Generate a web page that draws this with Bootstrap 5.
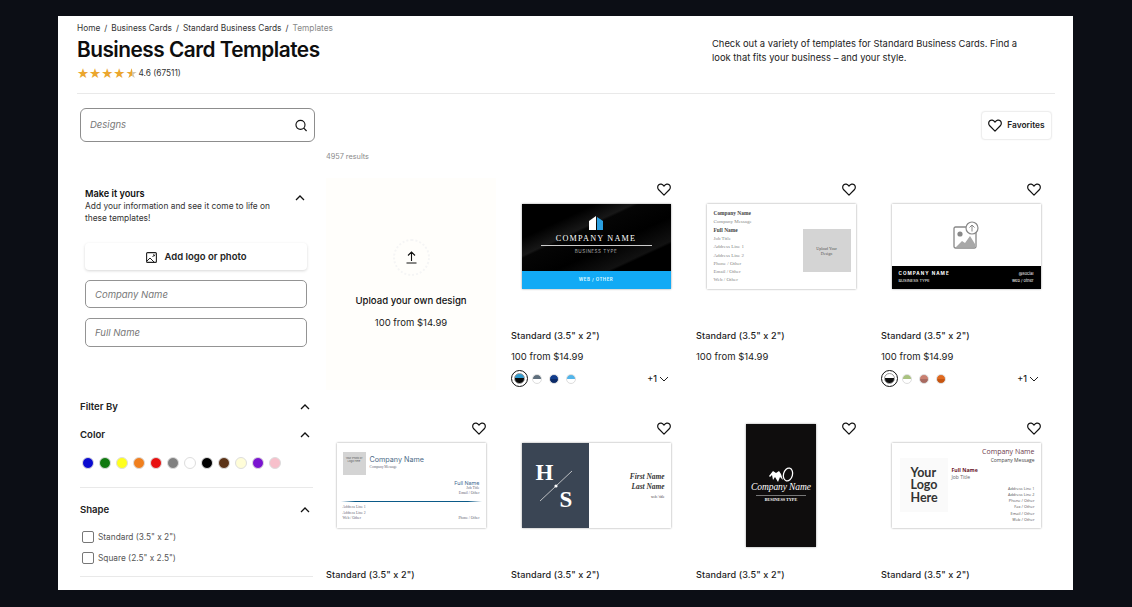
<!doctype html>
<html lang="en"><head><meta charset="utf-8"><title>Business Card Templates</title>
<link href="https://cdn.jsdelivr.net/npm/bootstrap@5.3.0/dist/css/bootstrap.min.css" rel="stylesheet">
<style>
html,body{height:607px;overflow:hidden}
body{background:#0c0e15;font-family:Inter,"Liberation Sans",sans-serif;color:#161616}
.sheet{background:#fff;width:1015px;height:574px;margin:16px 0 0 58px;padding:7px 18px 0 19px;overflow:hidden}
.head-row{height:71px;border-bottom:1px solid #e9e9e9}
.crumbs{font-size:8.3px;line-height:11px;margin:0;--bs-breadcrumb-divider-color:#333;--bs-breadcrumb-item-padding-x:4px;--bs-breadcrumb-margin-bottom:0}
.crumbs a{color:#333;text-decoration:none}
.crumbs .active{color:#888}
.page-title{font-size:20.8px;font-weight:600;letter-spacing:-.5px;line-height:28px;margin:2px 0 2px;color:#0e0e0e}
.rate{font-size:8.3px;line-height:14px;color:#333;gap:1px}
.stars{color:#eba62e;font-size:13.5px;line-height:14px;font-family:"DejaVu Sans",sans-serif}
.half{background:linear-gradient(90deg,#eba62e 55%,#cfc6b2 55%);-webkit-background-clip:text;background-clip:text;color:transparent}
.intro{width:315px;margin:14px 0 0 0;font-size:9.4px;line-height:14px;color:#222}
.side{width:249px;padding:14px 0 0 3px;flex:none}
.search-box{width:235px;height:34px;border:1px solid #8d8d8d;border-radius:6px;padding:0 7px 0 9px}
.search-box input,.ph-input{font-size:9.5px;font-style:italic;border:0;padding:0;box-shadow:none;background:transparent;color:#333}
.search-box input{padding-top:1px}
.search-box input::placeholder,.ph-input::placeholder{color:#777;opacity:1}
.make{padding:45px 8px 0 5px;height:258px}
.make-t{font-size:9.2px;font-weight:600;line-height:13px;color:#111}
.make-d{font-size:8.4px;line-height:12px;color:#333;width:200px}
.make-top{width:222px}
.make-top svg{margin-right:2px}
.logo-btn{margin-top:19px;height:27px;width:222px;font-size:9.5px;font-weight:600;background:#fff;border:0;border-radius:4px;box-shadow:0 1px 3px rgba(0,0,0,.16);color:#222;padding:1px 0 0}
.ph-input{display:block;width:222px;height:28px;border:1px solid #949494;border-radius:5px;padding:0 9px;margin-top:10px}
.ph-input+.ph-input{margin-top:10px;height:29px}
.flt{width:233px}
.flt-h{font-size:9.6px;font-weight:600;line-height:14px;height:14px;color:#222;padding-right:3px}
.color-h{margin-top:14px}
.dots{margin:15px 0 0 2px;gap:5px;height:12px;padding:0}
.dot{width:12px;height:12px;border-radius:50%;border:1px solid #ddd;flex:none}
.sep{border-top:1px solid #e9e9e9;height:0;margin:18px 0 15px}
.sep-end{margin-top:12px}
.shape-h{margin-bottom:14px}
.chk{font-size:8.3px;color:#555;gap:4px;height:12px;min-height:0;margin:0 0 9px 2px;padding:0}
.chk .form-check-input{width:12px;height:12px;margin:0;border:1px solid #777;border-radius:2px;float:none;flex:none}
.chk .form-check-label{line-height:12px}
.main-col{width:730px;padding-left:0}
.fav-row{padding:17px 3px 0 0;height:46px}
.fav-btn{width:71px;height:29px;font-size:8.4px;font-weight:600;border:1px solid #eee;border-radius:4px;background:#fff;color:#222;padding:0;gap:5px;box-shadow:0 0 2px rgba(0,0,0,.05)}
.results{font-size:7.3px;line-height:10px;color:#8a8a8a;margin:12px 0 0 0}
.tile-grid{display:grid;grid-template-columns:repeat(4,170px);column-gap:15px;grid-auto-rows:239px;margin-top:14px}
.tile{position:relative;font-size:10px}
.art{height:140px;display:flex;align-items:center;justify-content:center}
.like{position:absolute;top:7px;right:10px;width:14px;height:13px}
.name{font-size:9.1px;font-weight:500;line-height:14px;margin-top:13px;color:#1a1a1a;letter-spacing:.1px}
.price{font-size:9.5px;line-height:14px;margin-top:7px;color:#222}
.opts{margin-top:6px;height:17px;padding-right:12px}
.opts .ring{width:17px;height:17px;border:1.5px solid #111;border-radius:50%;margin-right:4px}
.sw{width:10px;height:10px;border-radius:50%;display:block;margin-right:7px;border:1px solid #ddd}
.ring .sw{margin:0;width:11px;height:11px;border:1px solid #999}
.more{font-size:9px;font-weight:500;color:#222;gap:2px}
.upload{background:#fffefb;height:212px;margin-top:2px;text-align:center}
.up-c{width:37px;height:37px;border-radius:50%;border:2px dotted #f5f5f5;margin:61px auto 18px}
.up-t{font-size:9.6px;font-weight:500;line-height:14px;color:#111}
.up-p{font-size:9.5px;line-height:14px;margin-top:8px;color:#222}
.mock{width:149px;height:85px;background:#fff;box-shadow:0 0 2px rgba(0,0,0,.4);overflow:hidden;display:flex;flex-direction:column}
.m-a{background:#000}
.m-a .top{height:67px;background:linear-gradient(155deg,#000 25%,#171717 38%,#050505 40%,#000 60%,#111 78%,#000 80%);color:#fff;text-align:center;padding-top:12px}
.m-a .cn{font-family:"Liberation Serif",serif;font-size:8.2px;letter-spacing:1.2px;line-height:10px;margin-top:4px;border-bottom:1px solid #ccc;margin-left:19px;margin-right:19px;padding-bottom:1px}
.m-a .bt{font-size:4.6px;letter-spacing:.5px;color:#aaa;line-height:8px;margin-top:2px}
.m-a .bot{height:18px;background:#12aaf5;color:#d8f6ff;font-size:4.4px;font-weight:700;letter-spacing:.5px;text-align:center;line-height:18px}
.serif{font-family:"Liberation Serif",serif}
.m-b{flex-direction:row;justify-content:space-between;padding:5px 5px 2px 7px;color:#888;font-family:"Liberation Serif",serif;font-size:5px;line-height:8.2px}
.m-b b{color:#444;font-weight:700;font-size:5.4px}
.m-b .photo{width:48px;height:43px;background:#d4d4d4;align-self:center;display:flex;align-items:center;justify-content:center;text-align:center;font-size:4px;line-height:5px;color:#555;margin-top:6px}
.m-c .top{height:62px;display:flex;align-items:center;justify-content:center}
.m-c .bot{height:23px;background:#000;color:#fff;padding:0 7px;display:flex;justify-content:space-between;align-items:center;font-size:4px;line-height:7px}
.m-c b{font-size:4.6px;letter-spacing:1px;display:block}
.m-d{padding:9px 6px 5px 6px;color:#667;font-size:3.6px;line-height:5px}
.m-d .ph{width:23px;height:23px;background:#d4d4d4;font-size:2.6px;line-height:3.5px;text-align:center;color:#555;padding-top:5px;flex:none}
.m-d .co{font-size:7.2px;line-height:10px;color:#4c6a86;margin-top:3px}
.m-d .rt{text-align:right;margin-top:5px;font-family:"Liberation Serif",serif;line-height:5.5px;font-size:3.8px}
.m-d .fn{font-family:Inter,sans-serif;color:#3f6a92;font-size:5.4px;line-height:6px}
.m-d .bar{height:1.5px;margin:4px -2px 3px;background:linear-gradient(90deg,transparent,#0b5a88 10%,#0b5a88 90%,transparent)}
.m-d .lo{font-family:"Liberation Serif",serif;font-size:3.8px;line-height:5.6px}
.m-e{flex-direction:row}
.m-e .lf{width:67px;background:#3a4554;color:#fff;position:relative;flex:none;font-family:"Liberation Serif",serif;font-weight:700;font-size:23px;line-height:23px}
.m-e .lf span{position:absolute}
.m-e .lf svg{position:absolute;left:17px;top:27px}
.m-e .rg{flex:1;text-align:right;padding:29px 6px 0 0;font-family:"Liberation Serif",serif;font-style:italic;font-weight:700;font-size:7.4px;line-height:10px;color:#333}
.m-e small{display:block;font-size:3.4px;font-style:normal;font-weight:400;margin-top:2px;line-height:6px}
.m-f{width:70px;height:123px;background:#0f0d0d;color:#fff;text-align:center;justify-content:center;padding-bottom:1px}
.m-f .sc{font-family:"Liberation Serif",serif;font-style:italic;font-size:9.5px;line-height:11px;margin-top:-1px;white-space:nowrap;letter-spacing:-.1px}
.m-f .bt{font-family:"Liberation Serif",serif;font-weight:700;font-size:4.2px;line-height:7px;border-top:1px solid #777;margin:2px 10px 0;white-space:nowrap}
.m-g{flex-direction:row;padding:5px 6px 5px 8px;font-family:"Open Sans",sans-serif;color:#555;font-size:3.9px;line-height:6.3px}
.m-g .yl{width:48px;height:54px;background:#fafafa;margin-top:10px;font-family:Lato,sans-serif;font-weight:700;font-size:12.5px;line-height:12.5px;color:#333;padding:9px 0 0 11px;flex:none}
.m-g .rr{flex:1;text-align:right}
.m-g .cm{font-size:7px;line-height:8px;color:#6e3a4c}
.m-g .cs{font-size:5px;line-height:8px;color:#444}
.m-g .fl{text-align:left;font-size:5.2px;line-height:7px;color:#6a1328;font-weight:700;margin:3px 0 0 4px}
.m-g .jt{text-align:left;font-size:5px;line-height:7px;margin:0 0 5px 4px;color:#666}
</style></head><body>
<svg width="0" height="0" class="d-block position-absolute"><defs>
<symbol id="heart" viewBox="0 0 16 15"><path d="M8 14 1.9 7.8C.2 6 .4 3.4 2 2c1.700-1.400 4-.9 6 1.600C10 1.100 12.300.6 14 2c1.600 1.400 1.800 4 .1 5.800Z" fill="none" stroke="#111" stroke-width="1.400" stroke-linejoin="round"/></symbol>
<symbol id="chev" viewBox="0 0 10 6"><path d="M1 5 5 1l4 4" fill="none" stroke="#111" stroke-width="1.300"/></symbol>
<symbol id="down" viewBox="0 0 10 6"><path d="M1 1l4 4 4-4" fill="none" stroke="#222" stroke-width="1"/></symbol>
</defs></svg>
<div class="sheet">
 <div class="head-row d-flex">
  <div style="width:635px" class="flex-none">
   <ol class="breadcrumb crumbs"><li class="breadcrumb-item"><a href="#">Home</a></li><li class="breadcrumb-item"><a href="#">Business Cards</a></li><li class="breadcrumb-item"><a href="#">Standard Business Cards</a></li><li class="breadcrumb-item active">Templates</li></ol>
   <h1 class="page-title">Business Card Templates</h1>
   <div class="rate d-flex align-items-center"><span class="stars">★★★★<span class="half">★</span></span><span>4.6 (67511)</span></div>
  </div>
  <p class="intro">Check out a variety of templates for Standard Business Cards. Find a look that fits your business – and your style.</p>
 </div>
 <div class="d-flex">
  <aside class="side">
   <div class="search-box d-flex align-items-center"><input class="flex-grow-1 form-control" placeholder="Designs" aria-label="Designs">
    <svg width="13" height="13" viewBox="0 0 13 13"><circle cx="5.800" cy="5.800" r="4.800" fill="none" stroke="#111" stroke-width="1.200"/><path d="m9.300 9.300 3 3" stroke="#111" stroke-width="1.300"/></svg></div>
   <div class="make">
    <div class="d-flex justify-content-between make-top"><div><div class="make-t">Make it yours</div><div class="make-d">Add your information and see it come to life on these templates!</div></div>
     <svg width="10" height="6" class="mt-2"><use href="#chev"/></svg></div>
    <button class="btn logo-btn d-flex align-items-center justify-content-center gap-1"><svg width="11" height="11" viewBox="0 0 11 11" class="me-1"><rect x=".6" y=".6" width="9.800" height="9.800" rx="1" fill="none" stroke="#222" stroke-width="1.100"/><path d="M1 9l3-3 4 4M7 2.500l2 1.500M6.500 5 9 2.500" fill="none" stroke="#222"/></svg>Add logo or photo</button>
    <input class="form-control ph-input" placeholder="Company Name" aria-label="Company Name">
    <input class="form-control ph-input" placeholder="Full Name" aria-label="Full Name">
   </div>
   <div class="flt">
    <div class="flt-h d-flex justify-content-between align-items-center">Filter By<svg width="10" height="6"><use href="#chev"/></svg></div>
    <div class="flt-h d-flex justify-content-between align-items-center color-h">Color<svg width="10" height="6"><use href="#chev"/></svg></div>
    <div class="dots d-flex">
     <i class="dot" style="background:#0a0ad0"></i><i class="dot" style="background:#117a11"></i><i class="dot" style="background:#ffff1e"></i><i class="dot" style="background:#f07f1e"></i><i class="dot" style="background:#e81010"></i><i class="dot" style="background:#808080"></i><i class="dot" style="background:#fff"></i><i class="dot" style="background:#000"></i><i class="dot" style="background:#5c3317"></i><i class="dot" style="background:#fffdd8"></i><i class="dot" style="background:#7a14d0"></i><i class="dot" style="background:#f7c0cb"></i></div>
    <div class="sep"></div>
    <div class="flt-h d-flex justify-content-between align-items-center shape-h">Shape<svg width="10" height="6"><use href="#chev"/></svg></div>
    <div class="form-check chk d-flex align-items-center"><input class="form-check-input" type="checkbox" id="c1"><label class="form-check-label" for="c1">Standard (3.5" x 2")</label></div>
    <div class="form-check chk d-flex align-items-center"><input class="form-check-input" type="checkbox" id="c2"><label class="form-check-label" for="c2">Square (2.5" x 2.5")</label></div>
    <div class="sep sep-end"></div>
   </div>
  </aside>
  <main class="main-col">
   <div class="fav-row d-flex justify-content-end"><button class="btn fav-btn d-flex align-items-center justify-content-center"><svg width="14" height="13"><use href="#heart"/></svg>Favorites</button></div>
   <div class="results">4957 results</div>
   <div class="tile-grid">
    <div class="tile upload"><div class="up-c d-flex align-items-center justify-content-center"><svg width="11" height="13" viewBox="0 0 11 13"><path d="M5.500 10V1.200M2 4.500l3.500-3.500L9 4.500M.5 12h10" fill="none" stroke="#111" stroke-width="1.100"/></svg></div><div class="up-t">Upload your own design</div><div class="up-p">100 from $14.99</div></div>

    <div class="tile"><svg class="like"><use href="#heart"/></svg><div class="art"><div class="mock m-a"><div class="top"><svg width="15" height="14" viewBox="0 0 15 14" class="d-block mx-auto"><path d="M0 5l7-5v14H0Z" fill="#fff"/><path d="M8 1l6 4v9H8Z" fill="#2a9fe0"/></svg><div class="cn">COMPANY NAME</div><div class="bt">BUSINESS TYPE</div></div><div class="bot">WEB / OTHER</div></div></div>
     <div class="name">Standard (3.5" x 2")</div><div class="price">100 from $14.99</div>
     <div class="opts d-flex align-items-center"><span class="ring d-flex align-items-center justify-content-center"><span class="sw" style="background:linear-gradient(#2e9ad0 50%,#0a0a0a 50%)"></span></span><span class="sw" style="background:linear-gradient(#5f6f7d 50%,#fff 50%)"></span><span class="sw" style="background:linear-gradient(#123c8c 50%,#0b2a68 50%)"></span><span class="sw" style="background:linear-gradient(#52b5ea 50%,#fff 50%)"></span><span class="more d-flex align-items-center ms-auto">+1<svg width="10" height="6"><use href="#down"/></svg></span></div></div>

    <div class="tile"><svg class="like"><use href="#heart"/></svg><div class="art"><div class="mock m-b"><div><b>Company Name</b><br>Company Message<br><b>Full Name</b><br>Job Title<br>Address Line 1<br>Address Line 2<br>Phone / Other<br>Email / Other<br>Web / Other</div><div class="photo">Upload Your<br>Design</div></div></div>
     <div class="name">Standard (3.5" x 2")</div><div class="price">100 from $14.99</div></div>

    <div class="tile"><svg class="like"><use href="#heart"/></svg><div class="art"><div class="mock m-c"><div class="top"><svg width="26" height="28" viewBox="0 0 26 28"><rect x="1" y="6" width="22" height="21" rx="1.500" fill="none" stroke="#888" stroke-width="1.300"/><circle cx="7" cy="13" r="2.600" fill="#888"/><path d="M3 26l6-6 3 2 5-7 5 8v3Z" fill="#a8a8a8"/><circle cx="19" cy="7" r="6" fill="#fff" stroke="#888" stroke-width="1.200"/><path d="M19 10.500V4m-2.500 2.500L19 4l2.500 2.500" fill="none" stroke="#888"/></svg></div><div class="bot"><div><b>COMPANY NAME</b>BUSINESS TYPE</div><div class="text-end">@social<br>web / other</div></div></div></div>
     <div class="name">Standard (3.5" x 2")</div><div class="price">100 from $14.99</div>
     <div class="opts d-flex align-items-center"><span class="ring d-flex align-items-center justify-content-center"><span class="sw" style="background:linear-gradient(#fff 50%,#111 50%)"></span></span><span class="sw" style="background:linear-gradient(#a9c27f 50%,#fff 50%)"></span><span class="sw" style="background:linear-gradient(#c97f70 50%,#a86a60 50%)"></span><span class="sw" style="background:linear-gradient(#e06a20 50%,#c75510 50%)"></span><span class="more d-flex align-items-center ms-auto">+1<svg width="10" height="6"><use href="#down"/></svg></span></div></div>

    <div class="tile"><svg class="like"><use href="#heart"/></svg><div class="art"><div class="mock m-d"><div class="d-flex gap-1"><div class="ph">Your Photo or Logo Here</div><div><div class="co">Company Name</div><span class="serif">Company Message</span></div></div><div class="rt"><div class="fn">Full Name</div>Job Title<br>Email / Other</div><div class="bar"></div><div class="d-flex justify-content-between align-items-end lo"><div>Address Line 1<br>Address Line 2<br>Web / Other</div><div>Phone / Other</div></div></div></div>
     <div class="name">Standard (3.5" x 2")</div></div>

    <div class="tile"><svg class="like"><use href="#heart"/></svg><div class="art"><div class="mock m-e"><div class="lf"><span style="left:14px;top:18px">H</span><span style="left:38px;top:45px">S</span><svg width="34" height="32" viewBox="0 0 34 32"><path d="M1 31 33 1" stroke="#ddd" stroke-width=".8"/><circle cx="17" cy="16" r="1.600" fill="#fff"/></svg></div><div class="rg">First Name<br>Last Name<small>web / title</small></div></div></div>
     <div class="name">Standard (3.5" x 2")</div></div>

    <div class="tile"><svg class="like"><use href="#heart"/></svg><div class="art"><div class="mock m-f"><svg width="27" height="16" viewBox="0 0 27 16" class="mx-auto d-block"><path d="M1 9 5 4l3 2 3-2 2 3 2 6-3-3-2 5-3-5-2 3-1-5-2 2Z" fill="#fff"/><ellipse cx="20" cy="7.500" rx="4.500" ry="6.500" fill="none" stroke="#fff" stroke-width="1.300" transform="rotate(15 20 7.500)"/></svg><div class="sc">Company Name</div><div class="bt">BUSINESS TYPE</div></div></div>
     <div class="name">Standard (3.5" x 2")</div></div>

    <div class="tile"><svg class="like"><use href="#heart"/></svg><div class="art"><div class="mock m-g"><div class="yl">Your<br>Logo<br>Here</div><div class="rr"><div class="cm">Company Name</div><div class="cs">Company Message</div><div class="fl">Full Name</div><div class="jt">Job Title</div>Address Line 1<br>Address Line 2<br>Phone / Other<br>Fax / Other<br>Email / Other<br>Web / Other</div></div></div>
     <div class="name">Standard (3.5" x 2")</div></div>
   </div>
  </main>
 </div>
</div>
</body></html>
